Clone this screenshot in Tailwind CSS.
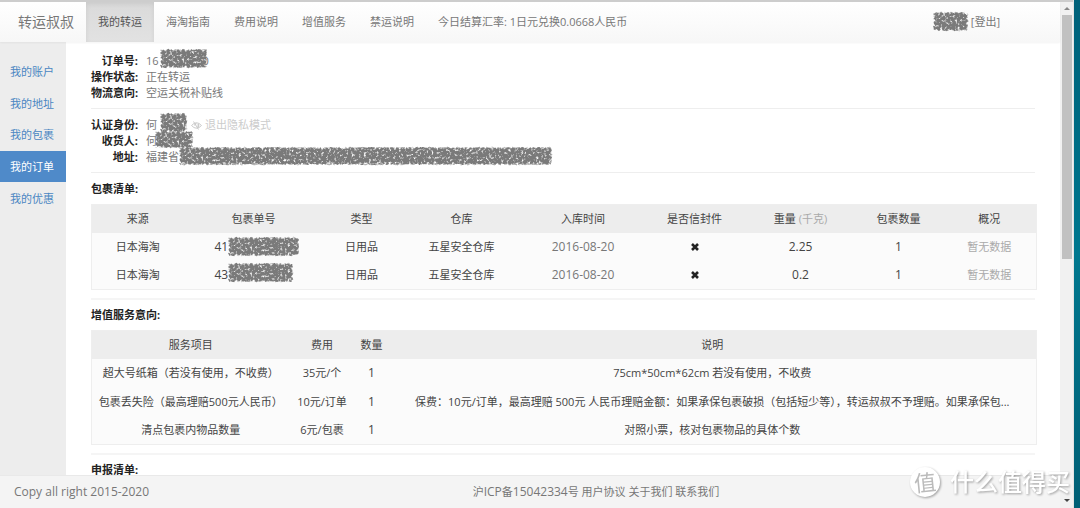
<!DOCTYPE html>
<html lang="zh-CN">
<head>
<meta charset="utf-8">
<title>转运叔叔</title>
<script src="https://cdn.jsdelivr.net/npm/@tailwindcss/browser@4"></script>
</head>
<body class="relative flex h-screen overflow-hidden bg-white font-['Open_Sans','Noto_Sans_CJK_SC',sans-serif] text-[11px] leading-4 text-[#444]">
<svg class="absolute size-0" aria-hidden="true">
  <filter id="scribble" x="-10%" y="-30%" width="120%" height="160%" color-interpolation-filters="sRGB">
    <feTurbulence type="fractalNoise" baseFrequency="0.4" numOctaves="2" seed="4" result="noise"/>
    <feColorMatrix in="noise" type="matrix" values="0 0 0 0 0.47  0 0 0 0 0.47  0 0 0 0 0.47  1 0 0 0 0.08" result="mask"/>
    <feGaussianBlur in="SourceAlpha" stdDeviation="1.5" result="soft"/>
    <feComposite in="soft" in2="mask" operator="in" result="cut"/>
    <feColorMatrix in="cut" type="matrix" values="0 0 0 0 0.48  0 0 0 0 0.48  0 0 0 0 0.48  0 0 0 3.5 -0.9"/>
  </filter>
</svg>

<div class="flex min-w-0 flex-1 flex-col border-t-2 border-[#cdcdcd]">
  <div class="flex min-h-0 flex-1">
    <div class="flex min-w-0 flex-1 flex-col">
      <header class="z-10 flex h-10 shrink-0 items-stretch bg-linear-to-b from-white to-[#f7f7f7] text-[#777] shadow-[0_1px_2px_rgba(0,0,0,0.05)]">
        <a href="#" class="flex items-center pr-3 pl-[18px] text-sm">转运叔叔</a>
        <nav class="flex items-stretch">
          <a href="#" class="flex items-center bg-linear-to-b from-[#dadada] to-[#e2e2e2] px-3 text-[#555] shadow-[inset_0_2px_5px_rgba(0,0,0,0.08)]">我的转运</a>
          <a href="#" class="flex items-center px-3">海淘指南</a>
          <a href="#" class="flex items-center px-3">费用说明</a>
          <a href="#" class="flex items-center px-3">增值服务</a>
          <a href="#" class="flex items-center px-3">禁运说明</a>
          <span class="flex items-center px-3">今日结算汇率: 1日元兑换0.0668人民币</span>
        </nav>
        <div class="ml-auto flex items-center gap-[2px] pr-[60px]">
          <svg class="h-6 w-9 overflow-visible" aria-hidden="true"><rect y="2" width="35" height="19" fill="#777" filter="url(#scribble)"/></svg>
          <a href="#">[登出]</a>
        </div>
      </header>

      <div class="flex min-h-0 flex-1 overflow-hidden">
        <aside class="w-[66px] shrink-0 bg-[#ededed] pt-[14px]">
          <nav class="flex h-[158px] flex-col text-[#4a86c2]">
            <a href="#" class="flex flex-1 items-center pt-px pl-[10px]">我的账户</a>
            <a href="#" class="flex flex-1 items-center pt-px pl-[10px]">我的地址</a>
            <a href="#" class="flex flex-1 items-center pt-px pl-[10px]">我的包裹</a>
            <a href="#" class="flex flex-1 items-center bg-[#4f8ac9] pt-px pl-[10px] text-white">我的订单</a>
            <a href="#" class="flex flex-1 items-center pt-px pl-[10px]">我的优惠</a>
          </nav>
        </aside>

        <main class="min-w-0 flex-1 pt-[11px] pr-[25px] pl-[25px]">
          <dl class="grid grid-cols-[47px_1fr] gap-x-2 text-[#777]">
            <dt class="text-right font-bold text-[#222]">订单号:</dt>
            <dd class="relative">16<span class="pl-[44px]">0</span><svg class="absolute -top-1 left-[14px] h-5 w-12 overflow-visible" aria-hidden="true"><rect width="47" height="19" fill="#777" filter="url(#scribble)"/></svg></dd>
            <dt class="text-right font-bold whitespace-nowrap text-[#222]">操作状态:</dt><dd>正在转运</dd>
            <dt class="text-right font-bold whitespace-nowrap text-[#222]">物流意向:</dt><dd>空运关税补贴线</dd>
          </dl>
          <hr class="mt-[7px] mb-2 border-[#eee]">
          <dl class="grid grid-cols-[47px_1fr] gap-x-2 text-[#777]">
            <dt class="text-right font-bold whitespace-nowrap text-[#222]">认证身份:</dt>
            <dd class="relative flex items-center">何<svg class="absolute -top-1 left-[14px] h-5 w-6 overflow-visible" aria-hidden="true"><rect width="27" height="19" fill="#777" filter="url(#scribble)"/></svg>
              <a href="#" class="ml-[34px] flex items-center gap-[3px] text-[#ccc]"><svg class="h-[9px] w-[11px]" viewBox="0 0 22 18" fill="none" stroke="currentColor" stroke-width="2" aria-hidden="true"><path d="M1 9Q11-2 21 9Q11 20 1 9Z"/><path d="M8 9a3 3 0 0 1 3-4" stroke-width="3"/><path d="M5 1L15 17"/><path d="M14 6q3 5-2 8" stroke-width="3"/></svg>退出隐私模式</a>
            </dd>
            <dt class="text-right font-bold text-[#222]">收货人:</dt>
            <dd class="relative">何<svg class="absolute -top-[2px] left-[9px] h-5 w-9 overflow-visible" aria-hidden="true"><rect width="38" height="17" fill="#777" filter="url(#scribble)"/></svg></dd>
            <dt class="text-right font-bold text-[#222]">地址:</dt>
            <dd class="relative">福建省<svg class="absolute -top-[2px] left-[33px] h-5 w-[374px] overflow-visible" aria-hidden="true"><rect width="373" height="18" fill="#777" filter="url(#scribble)"/></svg></dd>
          </dl>
          <hr class="mt-[7px] mb-2 border-[#eee]">

          <h2 class="mb-[7px] font-bold text-[#222]">包裹清单:</h2>
          <table class="w-full table-fixed border border-[#eee] bg-[#fbfbfb] text-center">
            <colgroup><col class="w-[92px]"><col class="w-[140px]"><col class="w-[76px]"><col class="w-[124px]"><col class="w-[119px]"><col class="w-[104px]"><col class="w-[108px]"><col class="w-[88px]"><col class="w-[94px]"></colgroup>
            <thead class="bg-[#ededed]">
              <tr class="h-7 *:font-normal"><th>来源</th><th>包裹单号</th><th>类型</th><th>仓库</th><th>入库时间</th><th>是否信封件</th><th>重量 <span class="text-[#aaa]">(千克)</span></th><th>包裹数量</th><th>概况</th></tr>
            </thead>
            <tbody>
              <tr class="h-7">
                <td>日本海淘</td>
                <td class="relative pl-[31px] text-left text-xs">41<svg class="absolute top-1 left-[44px] h-5 w-[72px] overflow-visible" aria-hidden="true"><rect width="71" height="19" fill="#777" filter="url(#scribble)"/></svg></td>
                <td>日用品</td><td>五星安全仓库</td><td class="text-xs text-[#777]">2016-08-20</td>
                <td><svg class="mx-auto size-2" viewBox="0 0 8 8" stroke="#222" stroke-width="2.6" role="img" aria-label="否"><path d="M1 1L7 7M7 1L1 7"/></svg></td>
                <td class="text-xs">2.25</td><td class="text-xs">1</td><td class="text-[#aaa]">暂无数据</td>
              </tr>
              <tr class="h-[29px]">
                <td>日本海淘</td>
                <td class="relative pl-[31px] text-left text-xs">43<svg class="absolute top-[2px] left-[44px] h-5 w-[66px] overflow-visible" aria-hidden="true"><rect width="65" height="19" fill="#777" filter="url(#scribble)"/></svg></td>
                <td>日用品</td><td>五星安全仓库</td><td class="text-xs text-[#777]">2016-08-20</td>
                <td><svg class="mx-auto size-2" viewBox="0 0 8 8" stroke="#222" stroke-width="2.6" role="img" aria-label="否"><path d="M1 1L7 7M7 1L1 7"/></svg></td>
                <td class="text-xs">0.2</td><td class="text-xs">1</td><td class="text-[#aaa]">暂无数据</td>
              </tr>
            </tbody>
          </table>
          <hr class="mt-2 mb-[7px] border-t-2 border-[#f5f5f5]">

          <h2 class="mb-[7px] font-bold text-[#222]">增值服务意向:</h2>
          <table class="w-full table-fixed border border-[#eee] bg-[#fbfbfb] text-center whitespace-nowrap">
            <colgroup><col class="w-[198px]"><col class="w-[65px]"><col class="w-[34px]"><col class="w-[648px]"></colgroup>
            <thead class="bg-[#ededed]">
              <tr class="h-7 *:font-normal"><th>服务项目</th><th>费用</th><th>数量</th><th>说明</th></tr>
            </thead>
            <tbody>
              <tr class="h-[29px]"><td>超大号纸箱（若没有使用，不收费）</td><td>35元/个</td><td class="text-xs">1</td><td>75cm*50cm*62cm 若没有使用，不收费</td></tr>
              <tr class="h-7"><td>包裹丢失险（最高理赔500元人民币）</td><td>10元/订单</td><td class="text-xs">1</td><td>保费：10元/订单，最高理赔 500元 人民币理赔金额：如果承保包裹破损（包括短少等），转运叔叔不予理赔。如果承保包...</td></tr>
              <tr class="h-[29px]"><td>清点包裹内物品数量</td><td>6元/包裹</td><td class="text-xs">1</td><td>对照小票，核对包裹物品的具体个数</td></tr>
            </tbody>
          </table>
          <hr class="mt-2 mb-[7px] border-t-2 border-[#f5f5f5]">
          <h2 class="font-bold text-[#222]">申报清单:</h2>
        </main>
      </div>

      <footer class="grid h-[33px] shrink-0 grid-cols-[1fr_auto_1fr] items-center border-t border-[#e9e9e9] bg-[#f4f4f4] text-[#777]">
        <span class="pl-[14px] text-xs">Copy all right 2015-2020</span>
        <span class="pl-[132px]">沪<span class="text-xs">ICP</span>备<span class="text-xs">15042334</span>号 <a href="#">用户协议</a> <a href="#">关于我们</a> <a href="#">联系我们</a></span>
      </footer>
    </div>

    <div class="flex w-[13px] shrink-0 flex-col items-center bg-[#f1f1f1]" aria-hidden="true">
      <svg class="h-[13px] w-2 shrink-0" viewBox="0 0 8 13"><path d="M1 8L4 5L7 8Z" fill="#888"/></svg>
      <div class="h-[244px] w-[10px] bg-[#c1c1c1]"></div>
      <svg class="mt-auto h-[14px] w-2 shrink-0" viewBox="0 0 8 14"><path d="M1 5L4 8L7 5Z" fill="#444"/></svg>
    </div>
  </div>
</div>
<div class="w-[7px] shrink-0 border-l border-[#e3e3e3] bg-linear-to-b from-[#00617a] via-[#00788f] to-[#005f75]"></div>

<div class="absolute right-[10px] bottom-[11px] flex items-center gap-[10px] text-white drop-shadow-[1px_1px_1px_rgba(0,0,0,0.35)]">
  <span class="grid size-[30px] place-items-center rounded-full bg-white text-[22px] leading-none text-[#bbb]"><span class="-rotate-6">值</span></span>
  <span class="text-2xl leading-[30px] font-medium">什么值得买</span>
</div>
</body>
</html>
